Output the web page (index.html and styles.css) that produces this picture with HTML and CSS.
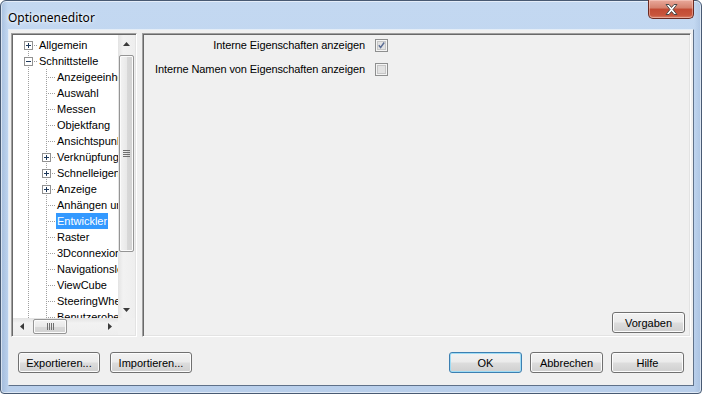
FILE: index.html
```html
<!DOCTYPE html>
<html lang="de">
<head>
    <meta charset="UTF-8">
    <title>Optioneneditor</title>
    <link rel="stylesheet" href="styles.css">
</head>
<body>
    <div class="window">
        <div class="titlebar">
            <span class="title">Optioneneditor</span>
            <button class="close_btn">
                <svg width="13" height="11" viewBox="0 0 13 11"><path d="M1 .5h3l2.5 3 2.5-3h3l-4 5 4 5h-3l-2.5-3-2.5 3h-3l4-5z" fill="#fff" stroke="#4a4a4a" stroke-width="1" stroke-linejoin="round"/></svg>
            </button>
        </div>

        <div class="client">
            <div class="main">
                <!-- linke seite: baum -->
                <div class="tree">
                    <div class="tree_view">
                        <div class="row"><span class="cell c_top"><svg class="box" width="9" height="9"><rect x=".5" y=".5" width="8" height="8" fill="#fff" stroke="#919191"/><path d="M2 4.5h5M4.5 2v5" stroke="#1e395b"/></svg></span><span class="label">Allgemein</span></div>
                        <div class="row"><span class="cell c_tee"><svg class="box" width="9" height="9"><rect x=".5" y=".5" width="8" height="8" fill="#fff" stroke="#919191"/><path d="M2 4.5h5" stroke="#1e395b"/></svg></span><span class="label">Schnittstelle</span></div>
                        <div class="row"><span class="cell c_line"></span><span class="cell c_tee"></span><span class="label">Anzeigeeinheiten</span></div>
                        <div class="row"><span class="cell c_line"></span><span class="cell c_tee"></span><span class="label">Auswahl</span></div>
                        <div class="row"><span class="cell c_line"></span><span class="cell c_tee"></span><span class="label">Messen</span></div>
                        <div class="row"><span class="cell c_line"></span><span class="cell c_tee"></span><span class="label">Objektfang</span></div>
                        <div class="row"><span class="cell c_line"></span><span class="cell c_tee"></span><span class="label">Ansichtspunkt</span></div>
                        <div class="row"><span class="cell c_line"></span><span class="cell c_tee"><svg class="box" width="9" height="9"><rect x=".5" y=".5" width="8" height="8" fill="#fff" stroke="#919191"/><path d="M2 4.5h5M4.5 2v5" stroke="#1e395b"/></svg></span><span class="label">Verknüpfungen</span></div>
                        <div class="row"><span class="cell c_line"></span><span class="cell c_tee"><svg class="box" width="9" height="9"><rect x=".5" y=".5" width="8" height="8" fill="#fff" stroke="#919191"/><path d="M2 4.5h5M4.5 2v5" stroke="#1e395b"/></svg></span><span class="label">Schnelleigenschaften</span></div>
                        <div class="row"><span class="cell c_line"></span><span class="cell c_tee"><svg class="box" width="9" height="9"><rect x=".5" y=".5" width="8" height="8" fill="#fff" stroke="#919191"/><path d="M2 4.5h5M4.5 2v5" stroke="#1e395b"/></svg></span><span class="label">Anzeige</span></div>
                        <div class="row"><span class="cell c_line"></span><span class="cell c_tee"></span><span class="label">Anhängen und Verschieben</span></div>
                        <div class="row"><span class="cell c_line"></span><span class="cell c_tee"></span><span class="label selected">Entwickler</span></div>
                        <div class="row"><span class="cell c_line"></span><span class="cell c_tee"></span><span class="label">Raster</span></div>
                        <div class="row"><span class="cell c_line"></span><span class="cell c_tee"></span><span class="label">3Dconnexion</span></div>
                        <div class="row"><span class="cell c_line"></span><span class="cell c_tee"></span><span class="label">Navigationsleiste</span></div>
                        <div class="row"><span class="cell c_line"></span><span class="cell c_tee"></span><span class="label">ViewCube</span></div>
                        <div class="row"><span class="cell c_line"></span><span class="cell c_tee"></span><span class="label">SteeringWheels</span></div>
                        <div class="row"><span class="cell c_line"></span><span class="cell c_tee"></span><span class="label">Benutzeroberfläche</span></div>
                    </div>

                    <div class="vscroll">
                        <span class="arrow"><svg width="7" height="4"><path d="M0 4h7L3.5 0z" fill="#3b3b3b"/></svg></span>
                        <span class="vthumb"><svg width="7" height="7"><path d="M0 .5h7M0 2.5h7M0 4.5h7M0 6.5h7" stroke="#707070"/></svg></span>
                        <span class="arrow bottom"><svg width="7" height="4"><path d="M0 0h7L3.5 4z" fill="#3b3b3b"/></svg></span>
                    </div>
                    <div class="hscroll">
                        <span class="arrow"><svg width="4" height="7"><path d="M4 0v7L0 3.5z" fill="#3b3b3b"/></svg></span>
                        <span class="hthumb"><svg width="7" height="7"><path d="M.5 0v7M2.5 0v7M4.5 0v7M6.5 0v7" stroke="#707070"/></svg></span>
                        <span class="arrow right"><svg width="4" height="7"><path d="M0 0v7l4-3.5z" fill="#3b3b3b"/></svg></span>
                    </div>
                    <div class="corner"></div>
                </div>

                <!-- rechte seite: einstellungen -->
                <div class="panel">
                    <div class="options">
                        <span class="opt_label">Interne Eigenschaften anzeigen</span>
                        <span class="check">
                            <svg width="13" height="13"><rect x=".5" y=".5" width="12" height="12" fill="#f4f4f4" stroke="#8e8f8f"/><rect x="2.5" y="2.5" width="8" height="8" fill="#e2e2e2" stroke="#c6c6c6"/><path d="M3.8 6.3l1.8 2.2 3.6-5" fill="none" stroke="#5a6c94" stroke-width="1.4"/></svg>
                        </span>
                        <span class="opt_label">Interne Namen von Eigenschaften anzeigen</span>
                        <span class="check">
                            <svg width="13" height="13"><rect x=".5" y=".5" width="12" height="12" fill="#f4f4f4" stroke="#8e8f8f"/><rect x="2.5" y="2.5" width="8" height="8" fill="#e2e2e2" stroke="#c6c6c6"/></svg>
                        </span>
                    </div>
                    <button class="btn vorgaben_btn">Vorgaben</button>
                </div>
            </div>

            <div class="footer">
                <div class="btn_group">
                    <button class="btn wide">Exportieren...</button>
                    <button class="btn wide">Importieren...</button>
                </div>
                <div class="btn_group right">
                    <button class="btn default">OK</button>
                    <button class="btn">Abbrechen</button>
                    <button class="btn">Hilfe</button>
                </div>
            </div>
        </div>
    </div>
</body>
</html>
```

FILE: styles.css
```css
* {
  margin: 0;
  padding: 0;
  box-sizing: border-box;
}

body {
  width: 702px;
  height: 394px;
  background-color: #ffffff;
  font-family: "Liberation Sans", Arial, sans-serif;
  font-size: 11px;
  color: #000;
  overflow: hidden;
}

.window {
  width: 702px;
  height: 394px;
  display: flex;
  flex-direction: column;
  padding: 0 7px 7px 7px;
  border: 1px solid #485a73;
  border-radius: 6px 6px 4px 4px;
  background:
    linear-gradient(90deg, rgba(120, 150, 190, 0.35) 0, transparent 7px, transparent calc(100% - 7px), rgba(120, 150, 190, 0.25) 100%),
    linear-gradient(180deg, #c3d8f1 0%, #bdd3ee 60%, #b9cfeb 100%);
  box-shadow: inset 0 0 0 1px rgba(255, 255, 255, 0.55);
}

.titlebar {
  height: 28px;
  display: flex;
  align-items: center;
}

.title {
  font-family: "Noto Sans", "Liberation Sans", sans-serif;
  font-size: 12px;
  color: #000;
  text-shadow: 0 0 6px #fff, 0 0 3px #fff;
  margin-top: 4px;
}

.close_btn {
  margin-left: auto;
  align-self: flex-start;
  width: 46px;
  height: 19px;
  margin-top: -1px;
  border: 1px solid #6b2a22;
  border-top: none;
  border-radius: 0 0 5px 5px;
  background: linear-gradient(180deg, #e9a99b 0%, #d4806c 45%, #c24a33 50%, #c8553c 85%, #d8826a 100%);
  box-shadow: inset 0 0 0 1px rgba(255, 220, 210, 0.45);
  display: flex;
  align-items: center;
  justify-content: center;
}

.client {
  flex: 1;
  display: flex;
  flex-direction: column;
  padding: 3px 2px 0 2px;
  background-color: #f0f0f0;
  border: 1px solid;
  border-color: #e4edf7 #5f7189 #5f7189 #e4edf7;
}

.main {
  height: 304px;
  display: flex;
  gap: 5px;
}

/* baum */
.tree {
  width: 126px;
  display: grid;
  grid-template-columns: 1fr 17px;
  grid-template-rows: 1fr 17px;
  border: 1px solid;
  border-color: #a0a0a0 #ffffff #ffffff #a0a0a0;
  box-shadow: inset 1px 1px 0 #696969, inset -1px -1px 0 #e3e3e3;
  padding: 1px;
  background-color: #fff;
}

.tree_view {
  overflow: hidden;
  padding: 2px 0 0 6px;
  background-color: #fff;
}

.row {
  display: flex;
  height: 16px;
  white-space: nowrap;
}

.cell {
  flex: none;
  width: 18px;
  height: 16px;
  display: flex;
  align-items: flex-start;
  background-repeat: no-repeat;
}

.c_line {
  background-image: repeating-linear-gradient(180deg, #a0a0a0 0 1px, transparent 1px 2px);
  background-size: 1px 16px;
  background-position: 9px 0;
}

.c_tee {
  background-image:
    repeating-linear-gradient(180deg, #a0a0a0 0 1px, transparent 1px 2px),
    repeating-linear-gradient(90deg, #a0a0a0 0 1px, transparent 1px 2px);
  background-size: 1px 16px, 9px 1px;
  background-position: 9px 0, 9px 8px;
}

.c_top {
  background-image:
    repeating-linear-gradient(180deg, #a0a0a0 0 1px, transparent 1px 2px),
    repeating-linear-gradient(90deg, #a0a0a0 0 1px, transparent 1px 2px);
  background-size: 1px 8px, 9px 1px;
  background-position: 9px 8px, 9px 8px;
}

.box {
  margin: 4px 0 0 5px;
  display: block;
}

.label {
  line-height: 16px;
  height: 16px;
  padding: 0 1px;
  margin-left: 1px;
}

.selected {
  background-color: #3399ff;
  color: #fff;
}

/* scrollbalken */
.vscroll {
  display: flex;
  flex-direction: column;
  background: linear-gradient(90deg, #e3e3e3 0%, #f2f2f2 30%, #eeeeee 100%);
}

.hscroll {
  display: flex;
  align-items: stretch;
  background: linear-gradient(180deg, #e3e3e3 0%, #f2f2f2 30%, #eeeeee 100%);
}

.corner {
  background-color: #f0f0f0;
}

.arrow {
  flex: none;
  width: 17px;
  height: 17px;
  display: flex;
  align-items: center;
  justify-content: center;
}

.vscroll .bottom {
  margin-top: auto;
}

.hscroll .right {
  margin-left: auto;
}

.vthumb {
  height: 197px;
  margin: 3px 1px 0 1px;
  border: 1px solid #959595;
  border-radius: 2px;
  background: linear-gradient(90deg, #f3f3f3 0%, #e9e9e9 50%, #d9d9d9 51%, #d2d2d2 100%);
  box-shadow: inset 0 0 0 1px #fbfbfb;
  display: flex;
  align-items: center;
  justify-content: center;
}

.hthumb {
  width: 34px;
  margin: 1px 0 1px 3px;
  border: 1px solid #959595;
  border-radius: 2px;
  background: linear-gradient(180deg, #f3f3f3 0%, #e9e9e9 50%, #d9d9d9 51%, #d2d2d2 100%);
  box-shadow: inset 0 0 0 1px #fbfbfb;
  display: flex;
  align-items: center;
  justify-content: center;
}

/* einstellungen */
.panel {
  flex: 1;
  display: flex;
  flex-direction: column;
  border: 1px solid;
  border-color: #a0a0a0 #ffffff #ffffff #a0a0a0;
  box-shadow: inset 1px 1px 0 #696969, inset -1px -1px 0 #e3e3e3;
  padding: 3px 5px 3px 12px;
  background-color: #f0f0f0;
}

.options {
  display: grid;
  grid-template-columns: max-content 13px;
  grid-auto-rows: 16px;
  row-gap: 8px;
  column-gap: 10px;
  align-items: center;
}

.opt_label {
  text-align: right;
  line-height: 16px;
  letter-spacing: -0.1px;
}

.check svg {
  display: block;
}

.btn {
  width: 73px;
  height: 21px;
  font-family: "Liberation Sans", Arial, sans-serif;
  font-size: 11px;
  color: #000;
  border: 1px solid #707070;
  border-radius: 3px;
  background: linear-gradient(180deg, #f2f2f2 0%, #ebebeb 48%, #dddddd 52%, #cfcfcf 100%);
  box-shadow: inset 0 0 0 1px #fcfcfc;
}

.vorgaben_btn {
  margin-top: auto;
  align-self: flex-end;
}

.btn.wide {
  width: 82px;
}

.btn.default {
  border-color: #3c7fb1;
  box-shadow: inset 0 0 0 1px #9fdcf5;
}

.footer {
  display: flex;
  justify-content: space-between;
  padding: 15px 7px 0 7px;
}

.btn_group {
  display: flex;
  gap: 10px;
}

.btn_group.right {
  gap: 8px;
}
```
